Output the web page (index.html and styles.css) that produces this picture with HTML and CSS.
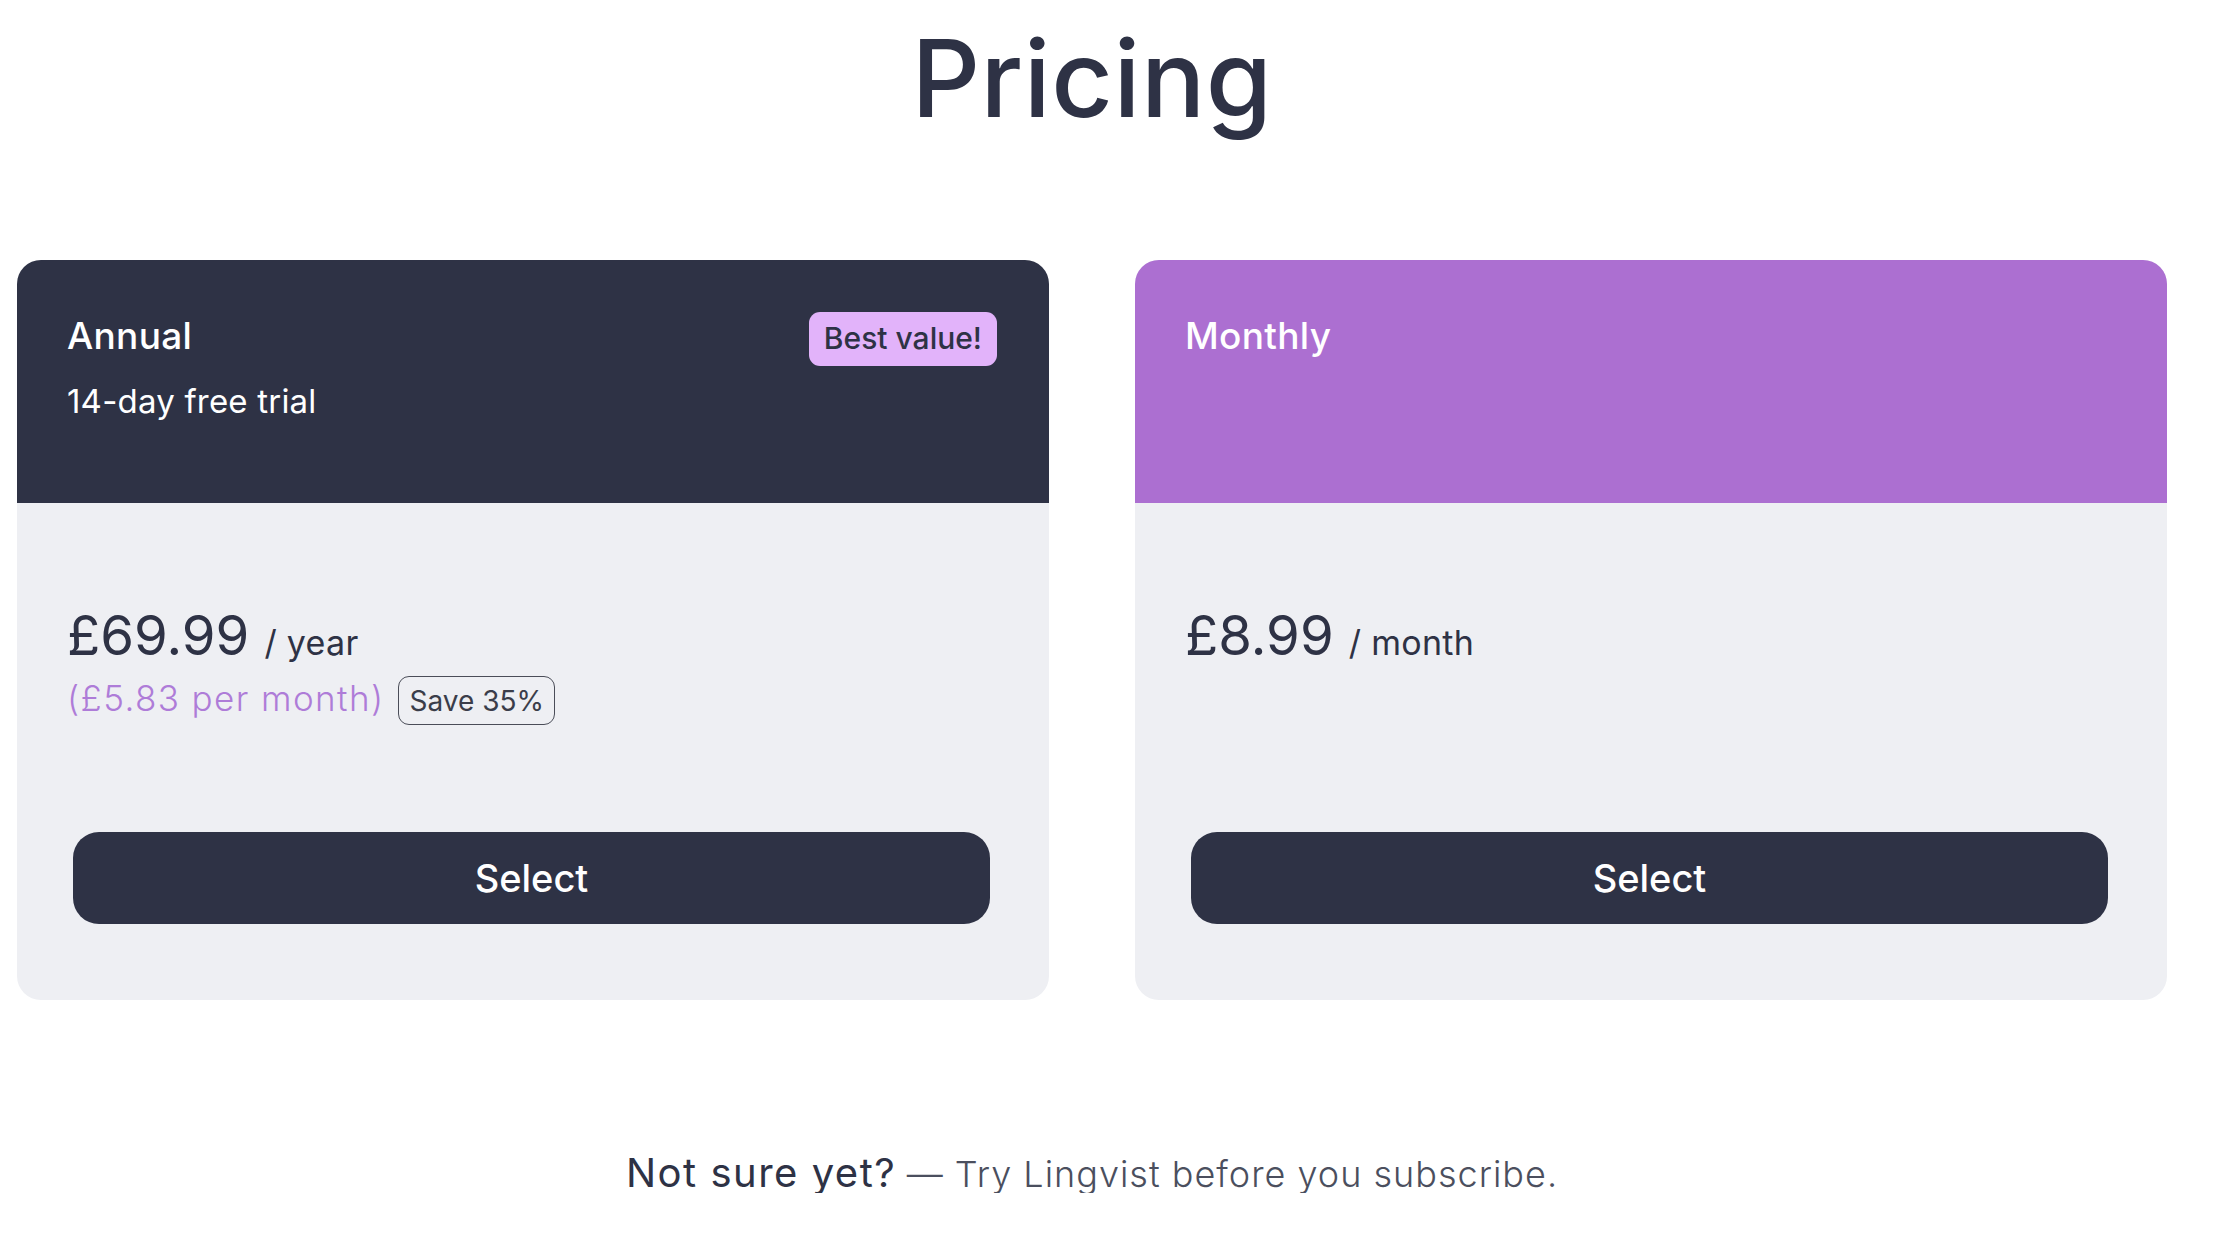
FILE: index.html
```html
<!DOCTYPE html>
<html lang="en">
<head>
<meta charset="utf-8">
<title>Pricing</title>
<link rel="stylesheet" href="styles.css">
</head>
<body>
<main class="page">
  <h1 class="title">Pricing</h1>
  <section class="plans">
    <article class="plan">
      <header class="plan-head plan-head--dark">
        <div class="plan-row">
          <h2 class="plan-name">Annual</h2>
          <span class="badge">Best value!</span>
        </div>
        <p class="plan-sub">14-day free trial</p>
      </header>
      <div class="plan-body">
        <div class="price-row">
          <span class="amount">£69.99</span>
          <span class="per">/ year</span>
        </div>
        <div class="price-extra">
          <span class="monthly-eq">(£5.83 per month)</span>
          <span class="save">Save 35%</span>
        </div>
        <button class="select-btn" type="button">Select</button>
      </div>
    </article>
    <article class="plan">
      <header class="plan-head plan-head--purple">
        <div class="plan-row">
          <h2 class="plan-name">Monthly</h2>
        </div>
      </header>
      <div class="plan-body">
        <div class="price-row">
          <span class="amount">£8.99</span>
          <span class="per">/ month</span>
        </div>
        <button class="select-btn" type="button">Select</button>
      </div>
    </article>
  </section>
  <p class="footer-note"><span class="note-strong">Not sure yet?</span> <span class="note-light">— Try Lingvist before you subscribe.</span></p>
</main>
</body>
</html>
```

FILE: styles.css
```css
* { box-sizing: border-box; }

html, body {
  margin: 0;
  padding: 0;
  background: #ffffff;
}

body {
  font-family: "Inter", "Noto Sans", "Liberation Sans", sans-serif;
  color: #2e3245;
}

.page {
  width: 2150px;
  margin-left: 17px;
  display: flex;
  flex-direction: column;
}

.title {
  margin: 25px 0 0;
  font-size: 107px;
  line-height: 1;
  font-weight: 500;
  text-align: center;
  color: #2e3245;
  letter-spacing: 0.5px;
}

.plans {
  margin-top: 128px;
  display: grid;
  grid-template-columns: 1032px 1032px;
  column-gap: 86px;
}

.plan {
  display: flex;
  flex-direction: column;
  height: 740px;
  border-radius: 24px;
  overflow: hidden;
  background: #eeeff3;
}

.plan-head {
  height: 243px;
  padding: 52px 52px 0 50px;
  color: #ffffff;
}

.plan-head--dark { background: #2e3245; }
.plan-head--purple { background: #ac6fd1; }

.plan-row {
  display: flex;
  align-items: flex-start;
  justify-content: space-between;
}

.plan-name {
  margin: 0;
  font-size: 37px;
  line-height: 47px;
  font-weight: 500;
  letter-spacing: 0.3px;
}

.badge {
  display: inline-block;
  padding: 11px 15px 13px;
  font-size: 30px;
  line-height: 1;
  font-weight: 500;
  color: #2e3245;
  background: #e2b3fa;
  border-radius: 11px;
}

.plan-sub {
  margin: 19px 0 0;
  font-size: 33px;
  line-height: 1;
  font-weight: 400;
  letter-spacing: 0.2px;
}

.plan-body {
  flex: 1;
  display: flex;
  flex-direction: column;
  padding: 105px 50px 76px;
}

.price-row {
  display: flex;
  align-items: baseline;
}

.amount {
  font-size: 54.5px;
  line-height: 1;
  font-weight: 400;
  color: #2e3245;
}

.per {
  margin-left: 15px;
  font-size: 34px;
  line-height: 1;
  font-weight: 400;
  letter-spacing: 0.3px;
  color: #2e3245;
}

.price-extra {
  margin-top: 13px;
  display: flex;
  align-items: baseline;
}

.monthly-eq {
  font-size: 35px;
  line-height: 1;
  font-weight: 300;
  letter-spacing: 1.4px;
  color: #ae7cd8;
}

.save {
  margin-left: 14px;
  padding: 10px 10px 9px;
  font-size: 28px;
  line-height: 1;
  font-weight: 400;
  color: #3a3d4a;
  border: 1.5px solid #4a4d58;
  border-radius: 11px;
}

.select-btn {
  margin: auto 9px 0 6px;
  height: 92px;
  border: none;
  border-radius: 26px;
  background: #2e3245;
  color: #ffffff;
  font-family: inherit;
  font-size: 38px;
  font-weight: 500;
  cursor: pointer;
}

.footer-note {
  margin: 153px 0 0;
  text-align: center;
  line-height: 1;
}

.note-strong {
  font-size: 40px;
  font-weight: 400;
  letter-spacing: 1.5px;
  color: #2e3245;
}

.note-light {
  margin-left: 6px;
  font-size: 36px;
  font-weight: 300;
  letter-spacing: 1px;
  color: #4b4f5e;
}
```
